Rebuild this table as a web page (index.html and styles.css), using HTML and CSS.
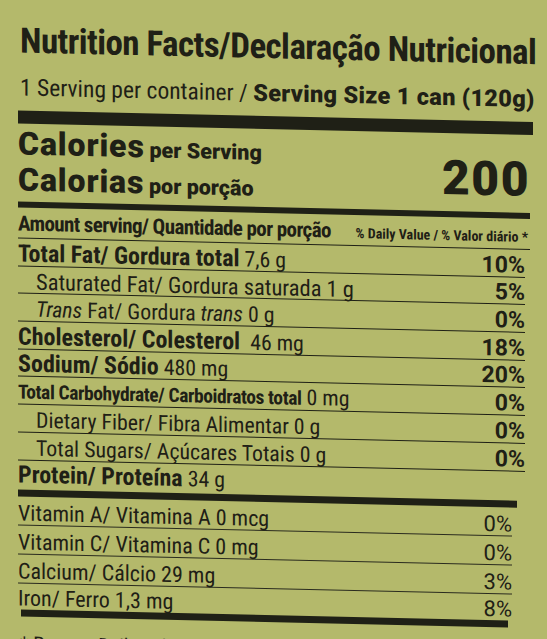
FILE: index.html
```html
<!DOCTYPE html>
<html lang="pt">
<head>
<meta charset="utf-8">
<link rel="stylesheet" href="styles.css">
</head>
<body>
<div class="label">
  <h1 class="title">Nutrition Facts/Declaração Nutricional</h1>
  <p class="serving">1 Serving per container / <b>Serving Size 1 can (120g)</b></p>
  <div class="bar bar-top"></div>
  <div class="calories">
    <div class="cal-left">
      <div class="cal-line"><span class="cal-big">Calories</span> <span class="cal-sub">per Serving</span></div>
      <div class="cal-line"><span class="cal-big">Calorias</span> <span class="cal-sub">por porção</span></div>
    </div>
    <div class="cal-num">200</div>
  </div>
  <div class="bar bar-mid"></div>
  <div class="head-row">
    <span class="head-left">Amount serving/ Quantidade por porção</span>
    <span class="head-right">% Daily Value / % Valor diário *</span>
  </div>
  <div class="rows">
    <div class="row"><span><b>Total Fat/ Gordura total</b> 7,6 g</span><span class="pct">10%</span></div>
    <div class="row indent"><span class="wide">Saturated Fat/ Gordura saturada 1 g</span><span class="pct">5%</span></div>
    <div class="row indent"><span><i>Trans</i> Fat/ Gordura <i>trans</i> 0 g</span><span class="pct">0%</span></div>
    <div class="row"><span><b>Cholesterol/ Colesterol</b>&nbsp; 46 mg</span><span class="pct">18%</span></div>
    <div class="row"><span><b>Sodium/ Sódio</b> 480 mg</span><span class="pct">20%</span></div>
    <div class="row"><span><b class="tight">Total Carbohydrate/ Carboidratos total</b> 0 mg</span><span class="pct">0%</span></div>
    <div class="row indent"><span>Dietary Fiber/ Fibra Alimentar 0 g</span><span class="pct">0%</span></div>
    <div class="row indent"><span>Total Sugars/ Açúcares Totais 0 g</span><span class="pct">0%</span></div>
    <div class="row last"><span><b>Protein/ Proteína</b> 34 g</span></div>
  </div>
  <div class="bar bar-vit"></div>
  <div class="vits">
    <div class="vrow"><span>Vitamin A/ Vitamina A 0 mcg</span><span class="vpct">0%</span></div>
    <div class="vrow"><span>Vitamin C/ Vitamina C 0 mg</span><span class="vpct">0%</span></div>
    <div class="vrow"><span>Calcium/ Cálcio 29 mg</span><span class="vpct">3%</span></div>
    <div class="vrow last"><span>Iron/ Ferro 1,3 mg</span><span class="vpct">8%</span></div>
  </div>
  <div class="bar bar-end"></div>
  <p class="foot">* Percent Daily Values are based on a 2,000 calorie diet.</p>
</div>
</body>
</html>
```
FILE: styles.css
```css
html, body {
  margin: 0;
  padding: 0;
}
body {
  width: 547px;
  height: 639px;
  overflow: hidden;
  background: #b4b96b;
  color: #1f2016;
  font-family: Roboto, "Liberation Sans", Arial, sans-serif;
  font-stretch: 75%;
}
.label {
  padding: 21px 0 0 18px;
  width: 515px;
  transform: skewY(1.3deg);
  transform-origin: 0 0;
}
.title {
  margin: 0 0 0 2px;
  font-size: 35px;
  line-height: 40px;
  font-weight: 700;
  letter-spacing: -0.55px;
  white-space: nowrap;
}
.serving {
  margin: 12px 0 0 2px;
  font-size: 23.5px;
  line-height: 28px;
  white-space: nowrap;
}
.serving b {
  font-weight: 900;
  font-stretch: 100%;
  font-size: 23.5px;
  letter-spacing: 0.3px;
}
.bar {
  background: #1f2016;
}
.bar-top {
  height: 13px;
  margin-top: 9px;
}
.calories {
  display: flex;
  justify-content: space-between;
  align-items: flex-end;
  padding: 5px 3px 1px 0;
}
.cal-line {
  line-height: 30px;
  white-space: nowrap;
}
.cal-big {
  font-weight: 900;
  font-stretch: 100%;
  font-size: 32px;
  letter-spacing: 0.9px;
}
.cal-sub {
  font-weight: 900;
  font-stretch: 100%;
  font-size: 21.5px;
  margin-left: 1px;
}
.cal-num {
  font-weight: 900;
  font-stretch: 100%;
  font-size: 48px;
  line-height: 40px;
  letter-spacing: 1.5px;
  margin-bottom: 12px;
}
.bar-mid {
  height: 6px;
  width: 512px;
}
.head-row {
  display: flex;
  justify-content: space-between;
  align-items: baseline;
  height: 28px;
  padding: 2px 3px 0 0;
  width: 509px;
  border-bottom: 1.5px solid #1f2016;
  white-space: nowrap;
}
.head-left {
  font-weight: 700;
  font-size: 21px;
  line-height: 28px;
  letter-spacing: -0.6px;
}
.head-right {
  font-weight: 700;
  font-size: 14px;
  margin-right: -1px;
}
.rows {
  width: 507px;
}
.row {
  display: flex;
  justify-content: space-between;
  align-items: flex-end;
  height: 26.7px;
  font-size: 21.8px;
  line-height: 22px;
  border-bottom: 1.5px solid #1f2016;
  white-space: nowrap;
}
.row b {
  font-weight: 700;
  font-size: 24px;
}
.row b.tight {
  font-size: 19.5px;
  letter-spacing: -0.4px;
}
.row.indent > span:first-child {
  padding-left: 18px;
}
.row .wide {
  font-size: 22.5px;
}
.row.last {
  border-bottom: none;
  height: 29.5px;
  align-items: flex-start;
}
.row.last > span {
  line-height: 24px;
  padding-top: 2px;
}
.pct {
  font-weight: 700;
  font-stretch: 100%;
  font-size: 23px;
}
.bar-vit {
  height: 7px;
  width: 499px;
}
.vits {
  width: 494px;
}
.vrow {
  display: flex;
  justify-content: space-between;
  align-items: flex-end;
  height: 28px;
  font-size: 22px;
  line-height: 22px;
  border-bottom: 1.5px solid #2a2b1f;
  white-space: nowrap;
}
.vrow.last {
  border-bottom: none;
  height: 26px;
}
.vpct {
  font-weight: 400;
  font-stretch: 100%;
  font-size: 22px;
}
.bar-end {
  height: 7px;
  width: 487px;
  margin-left: 3px;
}
.foot {
  margin: 15px 0 0 2px;
  font-size: 20px;
  line-height: 24px;
  white-space: nowrap;
}
```
